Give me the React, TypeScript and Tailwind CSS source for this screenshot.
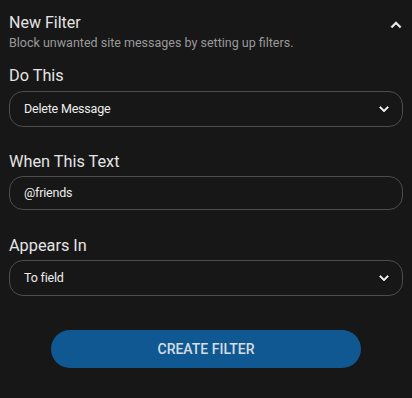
import React from "react";

function ChevronDown({ className }: { className?: string }) {
  return (
    <svg viewBox="0 0 24 24" className={className} fill="currentColor" stroke="currentColor" strokeWidth={0.9} strokeLinejoin="round">
      <path d="M16.59 8.59 12 13.17 7.41 8.59 6 10l6 6 6-6z" />
    </svg>
  );
}

function ChevronUp({ className }: { className?: string }) {
  return (
    <svg viewBox="0 0 24 24" className={className} fill="currentColor" stroke="currentColor" strokeWidth={0.9} strokeLinejoin="round">
      <path d="M12 8l-6 6 1.41 1.41L12 10.83l4.59 4.58L18 14z" />
    </svg>
  );
}

function SelectBox({ value }: { value: string }) {
  return (
    <div className="flex h-[36px] items-center justify-between rounded-[14px] border border-[#4d4d4d] pl-[14px] pr-[10px]">
      <span className="text-[12.5px] tracking-[-0.2px] text-[#ededed]">{value}</span>
      <ChevronDown className="mr-[-1px] h-[18px] w-[18px] text-[#f0f0f0]" />
    </div>
  );
}

export default function App() {
  return (
    <div
      className="h-[398px] w-[412px] bg-[#171717] px-[9px]"
      style={{ fontFamily: "Roboto, 'Liberation Sans', sans-serif" }}
    >
      <div className="pt-[13px]">
        <div className="flex h-[20px] items-start justify-between">
          <div className="text-[16px] leading-[20px] text-[#e4e4e4]">New Filter</div>
          <ChevronUp className="mr-[-3px] mt-[2px] h-[20px] w-[20px] shrink-0 text-[#f0f0f0]" />
        </div>
        <div className="mt-[2px] text-[12.5px] leading-[16px] text-[#9a9a9a]">
          Block unwanted site messages by setting up filters.
        </div>
      </div>

      <div className="mt-[15px] text-[16.3px] leading-[20px] text-[#e4e4e4]">Do This</div>
      <div className="mt-[5px]">
        <SelectBox value="Delete Message" />
      </div>

      <div className="mt-[25px] text-[16.3px] leading-[20px] text-[#e4e4e4]">When This Text</div>
      <div className="mt-[4px] flex h-[34px] items-center rounded-[14px] border border-[#4d4d4d] pl-[14px]">
        <span className="text-[12.5px] tracking-[-0.2px] text-[#ededed]">@friends</span>
      </div>

      <div className="mt-[26px] text-[16.3px] leading-[20px] text-[#e4e4e4]">Appears In</div>
      <div className="mt-[4px]">
        <SelectBox value="To field" />
      </div>

      <div className="mt-[34px] flex justify-center">
        <button className="h-[38px] w-[310px] rounded-full bg-[#105891] text-[14px] font-medium text-[#d5dde5]">
          CREATE FILTER
        </button>
      </div>
    </div>
  );
}
